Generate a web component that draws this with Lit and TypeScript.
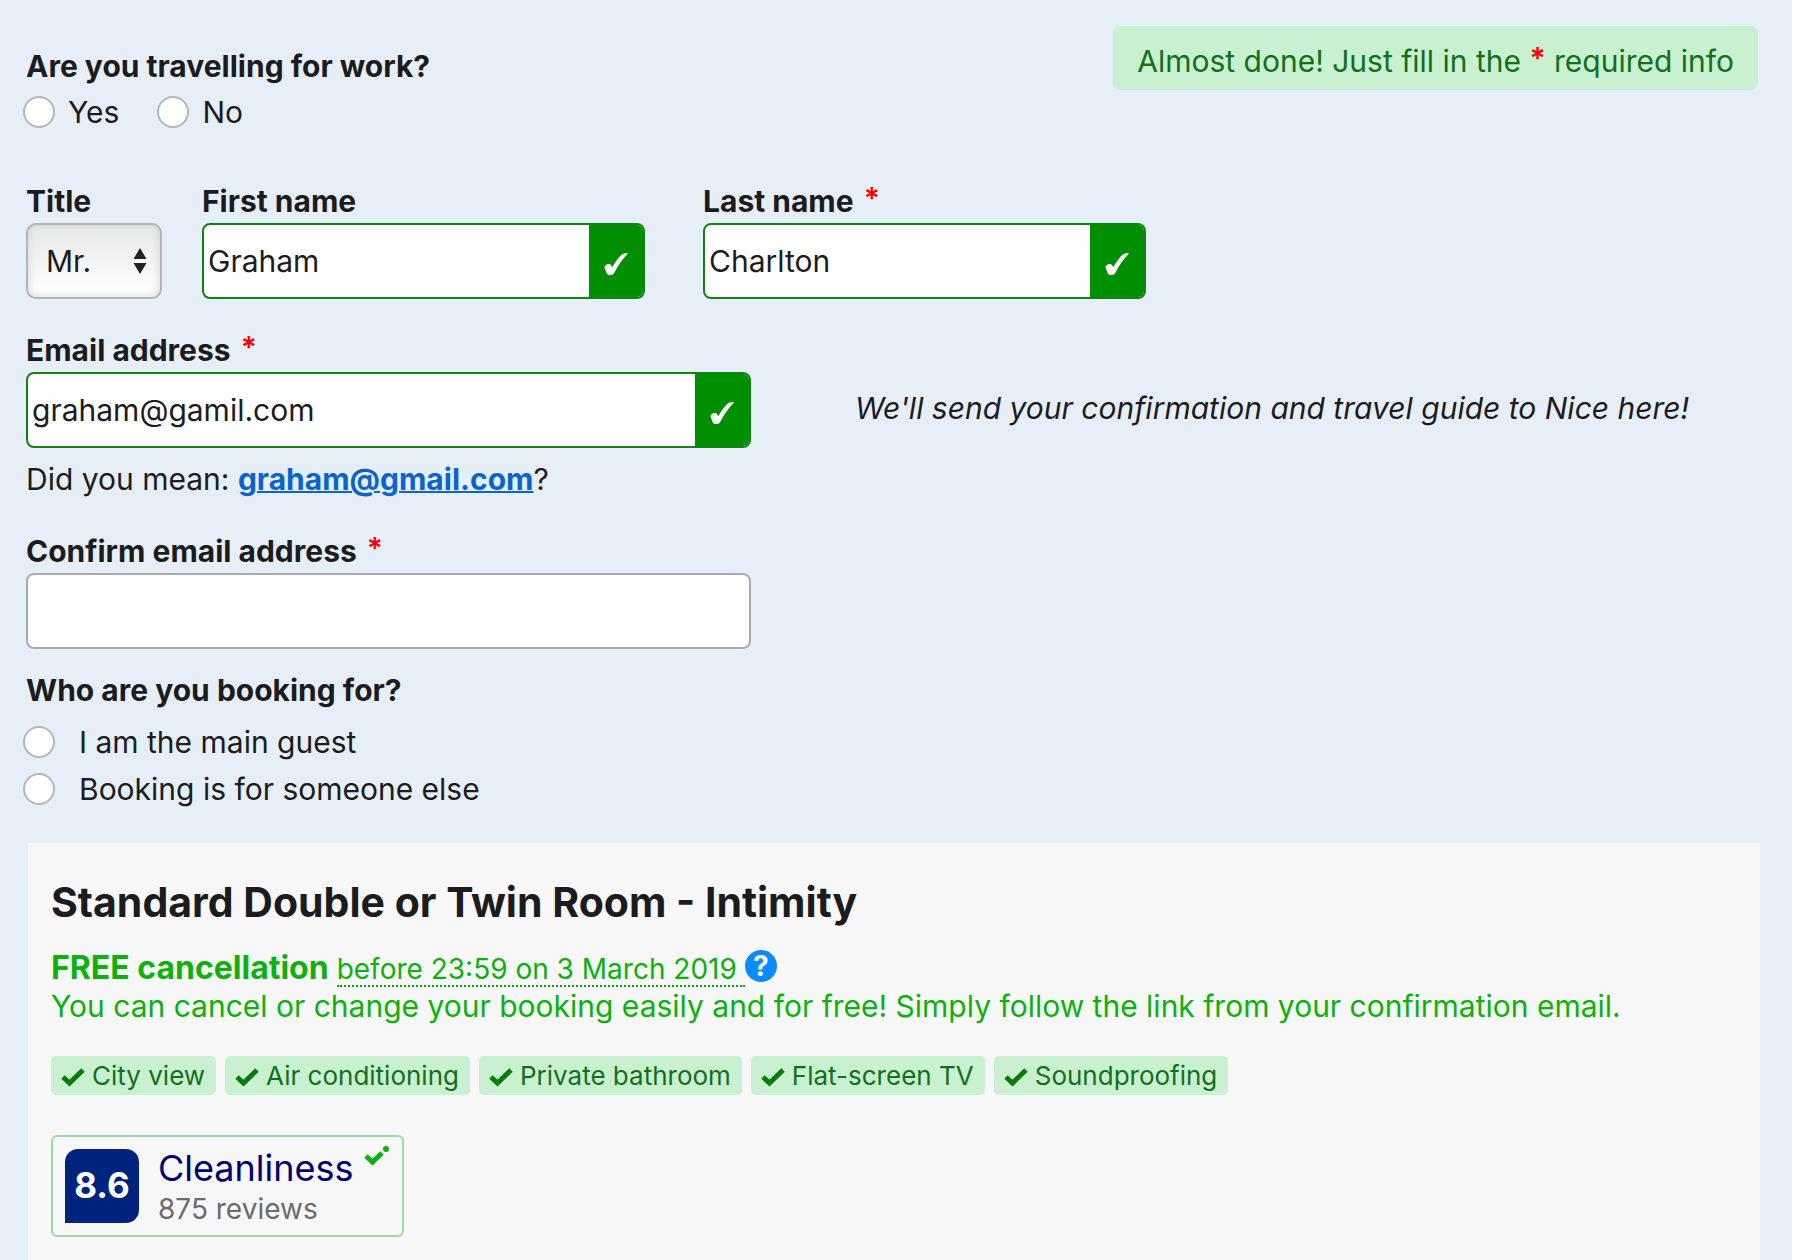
import { LitElement, html, css } from "lit";
import { customElement } from "lit/decorators.js";

const check = () => html`<svg class="check" viewBox="0 0 24 22" aria-hidden="true">
  <path d="M.5 14.500c0-3 5-4.500 6.500-2.500l1.200 2.300C11.500 8.500 15 3.500 18.500 1c1-.7 4.800-1 5.500-.5C18.500 6 14 12.500 10.500 19.500 9.500 21.500 8 22 6 22c-2 0-3-.5-3.500-2.300z"/>
</svg>`;

const tick = () => html`<svg class="tick" viewBox="0 0 24 22" aria-hidden="true">
  <path d="M2 12l6.500 6L22 5"/>
</svg>`;

const star = html`<span class="star">*</span>`;

@customElement("app-root")
export class AppRoot extends LitElement {
  static styles = css`
    :host {
      display: block;
      background: #fff;
      color: #1c1c1e;
      font-family: Inter, "Liberation Sans", sans-serif;
      font-size: 30px;
      line-height: 32px;
    }
    * { box-sizing: border-box; }
    .page {
      min-height: 100vh;
      margin-right: 8px;
      padding: 26px 32px 0 26px;
      background: #e6eff8;
      display: flex;
      flex-direction: column;
    }
    .top { display: flex; justify-content: space-between; align-items: flex-start; }
    fieldset { margin: 0; padding: 0; border: 0; min-width: 0; }
    legend { padding: 0; }
    label, legend { font-weight: 700; }
    .travel { margin-top: 24px; }
    .choices { display: flex; gap: 38px; margin: 14px 0 0 -3px; }
    .choices.stacked { flex-direction: column; gap: 15px; margin-top: 20px; }
    .choice { display: flex; align-items: center; gap: 13px; font-weight: 400; }
    .stacked .choice { gap: 24px; }
    input[type="radio"] {
      appearance: none;
      width: 32px;
      height: 32px;
      margin: 0;
      border: 2px solid #b4b6b9;
      border-radius: 50%;
      background: #fff;
    }
    .notice {
      margin-right: 2px;
      padding: 19px 24px 13px;
      border-radius: 7px;
      background: #c9f0d1;
      color: #11701a;
    }
    .star { color: #f00; font-weight: 600; line-height: 0; vertical-align: 3px; }
    .field { display: flex; flex-direction: column; gap: 6px; min-width: 0; }
    .field .star { margin-left: 3px; }
    .names { display: flex; gap: 40px; max-width: 1120px; margin-top: 57px; }
    .title { width: 136px; flex: none; }
    .pair { flex: 1; display: grid; grid-template-columns: 1fr 1fr; column-gap: 58px; }
    .box {
      display: flex;
      height: 76px;
      border: 2px solid #a9abae;
      border-radius: 8px;
      background: #fff;
      overflow: hidden;
    }
    .box.ok { border-color: #118312; }
    .box input {
      flex: 1;
      min-width: 0;
      border: 0;
      padding: 0 4px;
      background: none;
      font: inherit;
      line-height: 44px;
      color: inherit;
      outline: none;
    }
    .badge {
      width: 54px;
      flex: none;
      display: flex;
      align-items: center;
      justify-content: center;
      padding-top: 6px;
      background: #008f00;
    }
    .check { width: 24px; height: 22px; fill: #fff; }
    .picker { display: grid; align-items: center; }
    .picker > * { grid-area: 1 / 1; }
    select {
      appearance: none;
      width: 100%;
      height: 76px;
      padding: 0 18px;
      border: 2px solid #b2b4b5;
      border-radius: 10px;
      background: linear-gradient(#e6e8e7, #fff);
      box-shadow: inset 0 0 8px #d0d2d1;
      font: inherit;
      color: inherit;
    }
    .arrows { width: 14px; height: 26px; justify-self: end; margin-right: 15px; pointer-events: none; fill: #222; }
    .email { display: grid; grid-template-columns: 725px 1fr; column-gap: 104px; margin-top: 35px; }
    .hint { align-self: end; margin: 0 0 24px; font-style: italic; }
    .suggest { margin: 15px 0 0; }
    .suggest a { color: #0b63ce; font-weight: 700; text-decoration-thickness: 2px; }
    .confirm { margin-top: 40px; max-width: 725px; }
    .who { margin-top: 25px; }
    .room {
      flex: 1;
      margin: 38px 0 0 2px;
      padding: 35px 23px 20px;
      background: #f7f7f7;
    }
    h2 { margin: 0; font-size: 41px; line-height: 48px; font-weight: 700; }
    .cancel { display: flex; align-items: baseline; gap: 8px; margin: 26px 0 0; color: #0cb10c; }
    .cancel strong { font-size: 32px; font-weight: 700; }
    .until { padding-right: 8px; border-bottom: 2px dotted #0aa00a; font-size: 28px; }
    .help {
      align-self: flex-start;
      width: 32px;
      height: 32px;
      margin: -2px 0 0 -8px;
      padding: 0;
      border: 0;
      border-radius: 50%;
      background: #0a8bff;
      color: #fff;
      font: 700 28px/32px Inter, sans-serif;
    }
    .free { margin: 3px 0 0; color: #0cb10c; }
    .chips { display: flex; flex-wrap: wrap; gap: 9px; margin: 34px 0 0; padding: 0; list-style: none; }
    .chips li {
      display: flex;
      align-items: center;
      gap: 7px;
      height: 39px;
      padding: 0 11px 0 10px;
      border-radius: 5px;
      background: #c9f0d1;
      color: #11701a;
      font-size: 26px;
    }
    .tick { width: 24px; height: 22px; fill: none; stroke: #067d0a; stroke-width: 5; }
    .review {
      display: inline-flex;
      gap: 19px;
      margin-top: 40px;
      padding: 8px 12px;
      border: 2px solid #97dca7;
      border-radius: 6px;
    }
    .score {
      width: 74px;
      height: 74px;
      margin-top: 4px;
      border-radius: 13px 13px 13px 0;
      background: #00247d;
      color: #fff;
      font-size: 35px;
      font-weight: 700;
      line-height: 72px;
      text-align: center;
    }
    .name { display: flex; gap: 10px; font-size: 36px; line-height: 46px; color: #000070; }
    .small { width: 26px; height: 22px; fill: none; stroke: #0cb10c; stroke-width: 5; }
    .small circle { fill: #0cb10c; stroke: none; }
    .count { color: #6b6b6b; font-size: 28px; line-height: 36px; }
  `;

  render() {
    const perks = ["City view", "Air conditioning", "Private bathroom", "Flat-screen TV", "Soundproofing"];
    return html`<main class="page">
      <div class="top">
        <fieldset class="travel">
          <legend>Are you travelling for work?</legend>
          <div class="choices">
            <label class="choice"><input type="radio" name="work" value="yes" />Yes</label>
            <label class="choice"><input type="radio" name="work" value="no" />No</label>
          </div>
        </fieldset>
        <div class="notice">Almost done! Just fill in the ${star} required info</div>
      </div>

      <div class="names">
        <div class="field title">
          <label for="title">Title</label>
          <div class="picker">
            <select id="title"><option>Mr.</option><option>Mrs.</option><option>Ms.</option></select>
            <svg class="arrows" viewBox="0 0 14 26" aria-hidden="true"><path d="M7 0l6.500 11H.5zM7 26L.5 15h13z"/></svg>
          </div>
        </div>
        <div class="pair">
          <div class="field">
            <label for="first">First name</label>
            <div class="box ok"><input id="first" type="text" value="Graham" /><span class="badge">${check()}</span></div>
          </div>
          <div class="field">
            <label for="last">Last name ${star}</label>
            <div class="box ok"><input id="last" type="text" value="Charlton" /><span class="badge">${check()}</span></div>
          </div>
        </div>
      </div>

      <div class="email">
        <div class="field">
          <label for="email">Email address ${star}</label>
          <div class="box ok"><input id="email" type="email" value="graham@gamil.com" /><span class="badge">${check()}</span></div>
        </div>
        <p class="hint">We'll send your confirmation and travel guide to Nice here!</p>
      </div>
      <p class="suggest">Did you mean: <a href="#email">graham@gmail.com</a>?</p>

      <div class="field confirm">
        <label for="confirm">Confirm email address ${star}</label>
        <div class="box"><input id="confirm" type="email" /></div>
      </div>

      <fieldset class="who">
        <legend>Who are you booking for?</legend>
        <div class="choices stacked">
          <label class="choice"><input type="radio" name="guest" value="me" />I am the main guest</label>
          <label class="choice"><input type="radio" name="guest" value="other" />Booking is for someone else</label>
        </div>
      </fieldset>

      <section class="room">
        <h2>Standard Double or Twin Room - Intimity</h2>
        <p class="cancel">
          <strong>FREE cancellation</strong>
          <span class="until">before 23:59 on 3 March 2019</span>
          <button class="help" type="button">?</button>
        </p>
        <p class="free">You can cancel or change your booking easily and for free! Simply follow the link from your confirmation email.</p>
        <ul class="chips">${perks.map((p) => html`<li>${tick()}${p}</li>`)}</ul>
        <div class="review">
          <div class="score">8.6</div>
          <div>
            <div class="name">Cleanliness
              <svg class="small" viewBox="0 0 26 22" aria-hidden="true"><path d="M2 11l6.500 6L18 8"/><circle cx="22" cy="4" r="3"/></svg>
            </div>
            <div class="count">875 reviews</div>
          </div>
        </div>
      </section>
    </main>`;
  }
}
